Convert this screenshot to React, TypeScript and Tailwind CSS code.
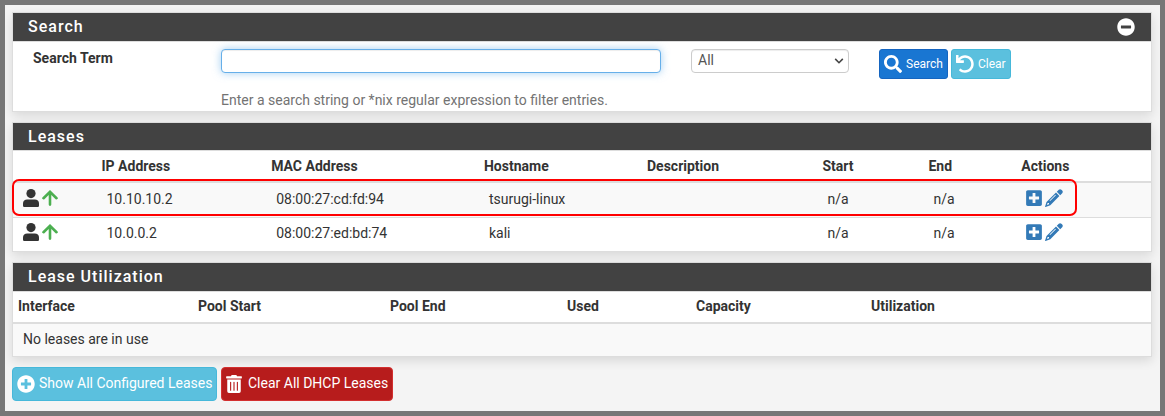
import type { ReactNode } from "react";
import {
  FaMinusCircle,
  FaPlusCircle,
  FaPlusSquare,
  FaSearch,
  FaTrashAlt,
  FaUndo,
} from "react-icons/fa";

const leases = [
  { ip: "10.10.10.2", mac: "08:00:27:cd:fd:94", host: "tsurugi-linux" },
  { ip: "10.0.0.2", mac: "08:00:27:ed:bd:74", host: "kali" },
];

const leaseCols = "grid grid-cols-[83.5px_169.7px_212.8px_163px_175.5px_106px_92.8px_1fr]";
const poolCols = "grid grid-cols-[180px_192px_177px_129px_175px_1fr]";

function UserIcon() {
  return (
    <svg className="h-[18px] w-[16px]" viewBox="0 0 16 18" fill="currentColor">
      <circle cx="8" cy="4.6" r="4.6" />
      <path d="M0 16.4V14.4C0 12 1.7 10.5 4.2 10.5h7.6c2.5 0 4.2 1.5 4.2 3.9v2c0 1-.6 1.6-1.6 1.6H1.6C.6 18 0 17.4 0 16.4z" />
    </svg>
  );
}

function UpIcon() {
  return (
    <svg className="size-[16px] text-[#4caf50]" viewBox="0 0 16 16" fill="none" stroke="currentColor" strokeWidth="2.6" strokeLinecap="round">
      <path d="M8 14.6V2M1.5 8.2 8 1.8 14.5 8.2" />
    </svg>
  );
}

function PencilIcon() {
  return (
    <svg className="size-[18px]" viewBox="0 0 18 18" fill="currentColor" fillRule="evenodd">
      <path d="M11.8 2.8 13.8.8c.8-.8 1.8-.8 2.6 0l.8.8c.8.8.8 1.8 0 2.6l-2 2z" />
      <path d="M11 3.6 14.4 7l-9.1 9.2-4.7 1.7c-.4.1-.6-.1-.5-.5L1.5 13zM5.1 12l5.8-5.7-.6-.6-5.8 5.7zM2.6 13.9l-.6 2 2-.6v-1.2z" />
    </svg>
  );
}

function Panel({ title, head, action, children }: { title: string; head: string; action?: ReactNode; children: ReactNode }) {
  return (
    <section className="border border-[#ddd] bg-white shadow-[0_4px_10px_rgba(0,0,0,0.11)]">
      <div className={`flex items-center justify-between border-b border-[#ddd] bg-[#424242] pl-[15px] pr-4 ${head}`}>
        <h2 className="-mt-px text-[16px] font-medium leading-[20px] tracking-[1px] text-white">{title}</h2>
        {action}
      </div>
      {children}
    </section>
  );
}

export default function App() {
  return (
    <div className="h-[416px] w-[1165px] overflow-hidden border-[5px] border-[#777] bg-[#f4f4f4] px-[7px] pt-[7px] font-['Roboto',sans-serif] text-[14px] leading-[20px] text-[#333]">
      <div className="flex w-[1140px] flex-col gap-[10px]">
        <Panel
          title="Search"
          head="h-[29px]"
          action={<FaMinusCircle className="size-[18px] text-white" />}
        >
          <div className="flex h-[69px] items-start pt-[7px]">
            <label htmlFor="term" className="-mt-px w-[208px] pl-5 font-bold">Search Term</label>
            <div className="w-[440px]">
              <input
                id="term"
                className="block h-[24px] w-full rounded-[4px] border border-[#66afe9] bg-white px-1.5 shadow-[inset_0_1px_1px_rgba(0,0,0,0.075),0_0_8px_rgba(102,175,233,0.6)] outline-none"
              />
              <p className="mt-[17px] text-[#737373]">Enter a search string or *nix regular expression to filter entries.</p>
            </div>
            <div className="ml-[30px] flex h-[24px] w-[158px] items-center justify-between rounded-[4px] border border-[#ccc] pl-[6px] pr-[4px] text-[#555] shadow-[inset_0_1px_1px_rgba(0,0,0,0.075)]">
              <span className="-mt-0.5">All</span>
              <svg className="h-[6px] w-[10px]" viewBox="0 0 10 6" fill="none" stroke="#444" strokeWidth="1.6">
                <path d="M1.2 .9 5 4.7 8.8 .9" />
              </svg>
            </div>
            <button className="ml-[30px] flex h-[30px] w-[69px] items-center rounded-[3px] border border-[#1565c0] bg-[#1976d2] pl-1 text-[12px] text-white">
              <FaSearch className="size-[18px] shrink-0" />
              <span className="ml-1">Search</span>
            </button>
            <button className="ml-[3px] flex h-[30px] w-[60px] items-center rounded-[3px] border border-[#46b8da] bg-[#5bc0de] pl-1 text-[12px] text-white">
              <FaUndo className="size-[18px] shrink-0" />
              <span className="ml-1">Clear</span>
            </button>
          </div>
        </Panel>

        <div className="relative">
          <Panel title="Leases" head="h-[28px] pt-px">
            <div className={`${leaseCols} h-[32px] border-b-2 border-[#ddd] pt-[5px] font-bold`}>
              <span />
              <span className="pl-[5px]">IP Address</span>
              <span className="pl-[5px]">MAC Address</span>
              <span className="pl-[5px]">Hostname</span>
              <span className="pl-[5px]">Description</span>
              <span className="pl-[5px]">Start</span>
              <span className="pl-[5px]">End</span>
              <span className="pl-[5px]">Actions</span>
            </div>
            {leases.map((l) => (
              <div key={l.ip} className={`${leaseCols} items-start odd:h-[35px] odd:border-b odd:border-[#ddd] odd:bg-[#f9f9f9] odd:pt-1.5 even:h-[33px] even:pt-[5px]`}>
                <span className="-mt-px flex h-5 items-center gap-[3px] pl-[10px]">
                  <UserIcon />
                  <UpIcon />
                </span>
                <span className="pl-[10px]">{l.ip}</span>
                <span className="pl-[10px]">{l.mac}</span>
                <span className="pl-[10px]">{l.host}</span>
                <span />
                <span className="pl-[10px]">n/a</span>
                <span className="pl-[10px]">n/a</span>
                <span className="-mt-px flex h-5 items-center gap-[3px] pl-[10px] text-[#337ab7]">
                  <FaPlusSquare className="h-[18px] w-[16px]" />
                  <PencilIcon />
                </span>
              </div>
            ))}
          </Panel>
          <div className="absolute left-0 top-[57px] h-[37px] w-[1065px] rounded-[7px] border-2 border-[#f00]" />
        </div>

        <Panel title="Lease Utilization" head="h-[29px]">
          <div className={`${poolCols} h-[32px] border-b-2 border-[#ddd] pt-1 font-bold`}>
            <span className="pl-[5px]">Interface</span>
            <span className="pl-[5px]">Pool Start</span>
            <span className="pl-[5px]">Pool End</span>
            <span className="pl-[5px]">Used</span>
            <span className="pl-[5px]">Capacity</span>
            <span className="pl-[5px]">Utilization</span>
          </div>
          <div className="h-[32px] bg-[#f9f9f9] pl-[10px] pt-[5px]">No leases are in use</div>
        </Panel>

        <div className="flex gap-1">
          <button className="flex h-[34px] w-[205px] items-center rounded-[4px] border border-[#46b8da] bg-[#5bc0de] pl-1 text-white">
            <FaPlusCircle className="size-[18px] shrink-0" />
            <span className="-mt-0.5 ml-1 whitespace-nowrap">Show All Configured Leases</span>
          </button>
          <button className="flex h-[34px] w-[172px] items-center rounded-[4px] border border-[#d32f2f] bg-[#b71c1c] pl-1 text-white">
            <FaTrashAlt className="h-[18px] w-[16px] shrink-0" />
            <span className="-mt-0.5 ml-[6px] whitespace-nowrap">Clear All DHCP Leases</span>
          </button>
        </div>
      </div>
    </div>
  );
}
